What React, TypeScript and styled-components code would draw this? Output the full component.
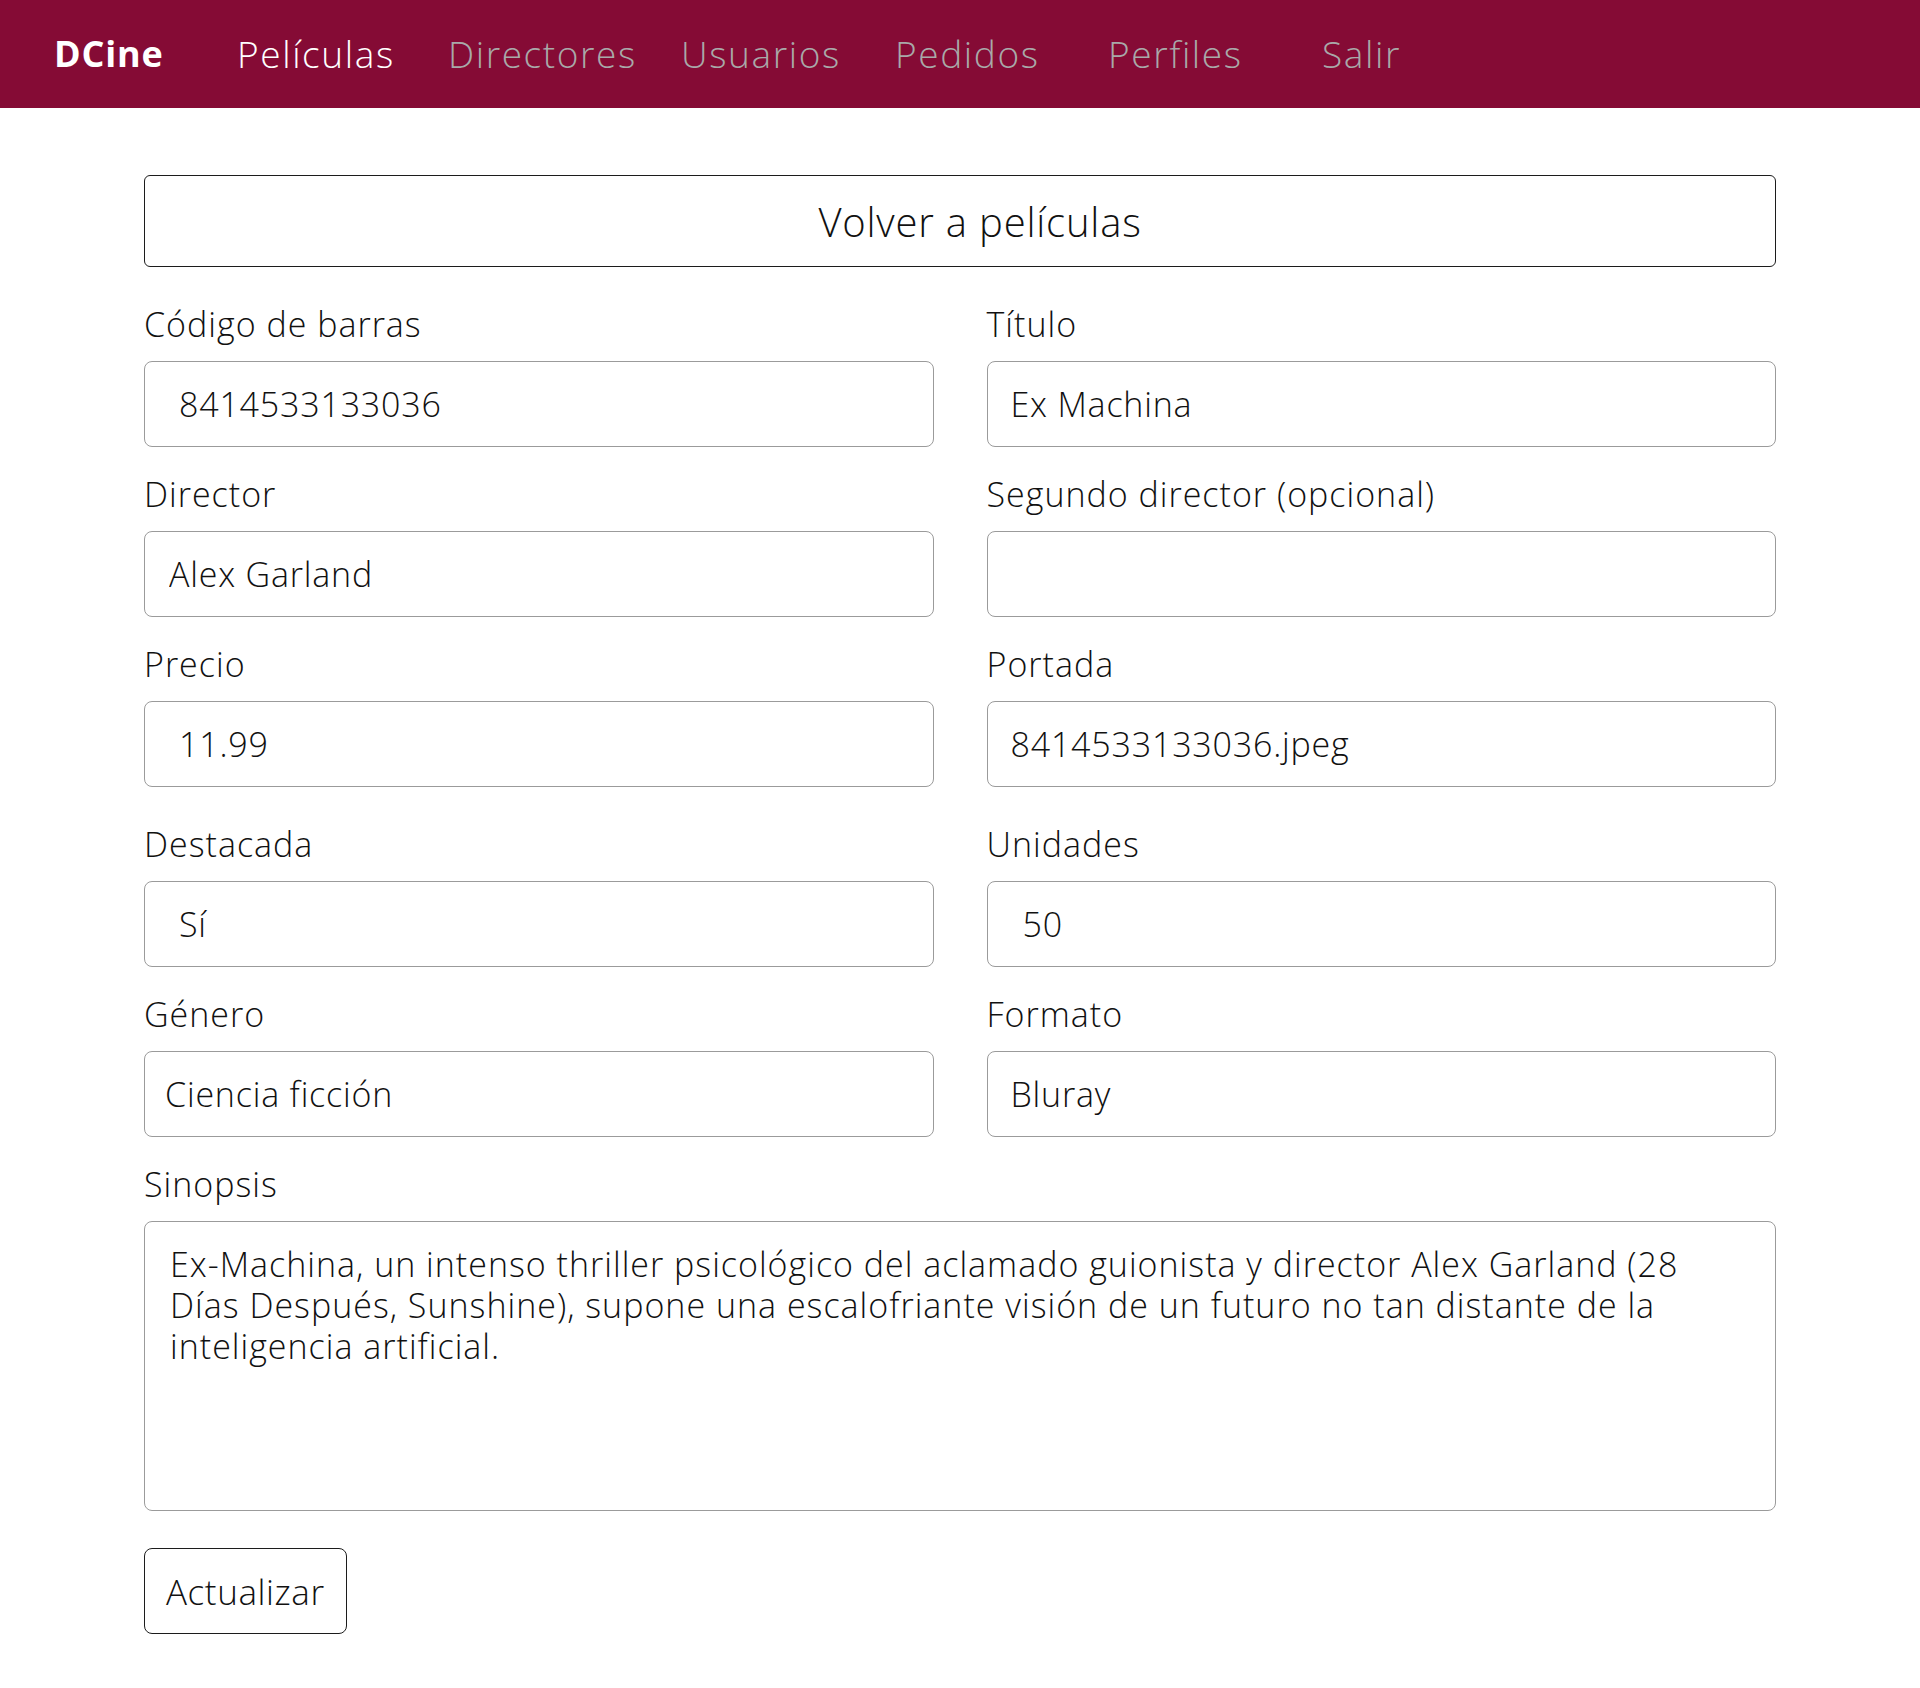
import React from "react";
import styled, { createGlobalStyle } from "styled-components";

const GlobalStyle = createGlobalStyle`
  * {
    box-sizing: border-box;
  }
  body {
    margin: 0;
    background: #fff;
    color: #111;
    font-family: "Open Sans", "Liberation Sans", sans-serif;
  }
`;

const links = [
  { label: "Películas", width: 211, active: true },
  { label: "Directores", width: 233 },
  { label: "Usuarios", width: 214 },
  { label: "Pedidos", width: 213 },
  { label: "Perfiles", width: 214 },
  { label: "Salir" },
];

const fields = [
  { label: "Código de barras", value: "8414533133036", pad: 34 },
  { label: "Título", value: "Ex Machina", pad: 23 },
  { label: "Director", value: "Alex Garland", pad: 24 },
  { label: "Segundo director (opcional)", value: "", pad: 23 },
  { label: "Precio", value: "11.99", pad: 34 },
  { label: "Portada", value: "8414533133036.jpeg", pad: 23 },
  { label: "Destacada", value: "Sí", pad: 34, spaced: true },
  { label: "Unidades", value: "50", pad: 35, spaced: true },
  { label: "Género", value: "Ciencia ficción", pad: 20 },
  { label: "Formato", value: "Bluray", pad: 23 },
];

const sinopsis =
  "Ex-Machina, un intenso thriller psicológico del aclamado guionista y director Alex Garland (28 Días Después, Sunshine), supone una escalofriante visión de un futuro no tan distante de la inteligencia artificial.";

const App: React.FC = () => {
  return (
    <>
      <GlobalStyle />
      <Navbar>
        <Brand href="#">DCine</Brand>
        {links.map((l) => (
          <NavLink key={l.label} href="#" $active={l.active} $w={l.width}>
            {l.label}
          </NavLink>
        ))}
      </Navbar>

      <Container>
        <BackButton type="button">Volver a películas</BackButton>

        <FormGrid>
          {fields.map((f) => (
            <Field key={f.label} $spaced={f.spaced}>
              <Label>{f.label}</Label>
              <Input value={f.value} readOnly $pad={f.pad} />
            </Field>
          ))}
          <Field $wide>
            <Label>Sinopsis</Label>
            <TextArea value={sinopsis} readOnly />
          </Field>
        </FormGrid>

        <SubmitButton type="button">Actualizar</SubmitButton>
      </Container>
    </>
  );
};

const Navbar = styled.nav`
  display: flex;
  align-items: center;
  height: 108px;
  padding: 0 0 2px 54px;
  background: #850b35;
`;

const Brand = styled.a`
  width: 183px;
  font-size: 36px;
  font-weight: 700;
  color: #fff;
  text-decoration: none;
  letter-spacing: 0.8px;
`;

const NavLink = styled.a<{ $active?: boolean; $w?: number }>`
  width: ${(p) => (p.$w ? `${p.$w}px` : "auto")};
  font-size: 37px;
  font-weight: 300;
  letter-spacing: 1.6px;
  color: ${(p) => (p.$active ? "#fff" : "#a9a9a9")};
  text-decoration: none;
`;

const Container = styled.main`
  width: 85%;
  margin: 0 auto;
  padding: 67px 0 40px;
`;

const BackButton = styled.button`
  display: block;
  width: 100%;
  height: 92px;
  margin-bottom: 37px;
  padding: 0 0 0 40px;
  background: #fff;
  border: 1px solid #1c1c1c;
  border-radius: 6px;
  font-family: inherit;
  font-size: 40px;
  font-weight: 300;
  letter-spacing: 0.8px;
  color: #111;
`;

const FormGrid = styled.div`
  display: grid;
  grid-template-columns: 1fr 1fr;
  column-gap: 53px;
  row-gap: 27px;
`;

const Field = styled.div<{ $spaced?: boolean; $wide?: boolean }>`
  display: flex;
  flex-direction: column;
  margin-top: ${(p) => (p.$spaced ? "10px" : "0")};
  grid-column: ${(p) => (p.$wide ? "1 / -1" : "auto")};
`;

const Label = styled.label`
  margin-bottom: 17px;
  font-size: 34px;
  font-weight: 300;
  line-height: 40px;
  letter-spacing: 1px;
  color: #111;
`;

const Input = styled.input<{ $pad: number }>`
  width: 100%;
  height: 86px;
  padding: 0 ${(p) => p.$pad}px;
  border: 1px solid #9b9b9b;
  border-radius: 8px;
  background: #fff;
  font-family: inherit;
  font-size: 34px;
  font-weight: 300;
  letter-spacing: 0.8px;
  color: #111;
  outline: none;
`;

const TextArea = styled.textarea`
  width: 100%;
  height: 290px;
  padding: 22px 25px;
  border: 1px solid #9b9b9b;
  border-radius: 8px;
  background: #fff;
  font-family: inherit;
  font-size: 34px;
  font-weight: 300;
  line-height: 41px;
  letter-spacing: 1px;
  color: #111;
  resize: none;
  outline: none;
`;

const SubmitButton = styled.button`
  margin-top: 37px;
  height: 86px;
  padding: 0 21px;
  background: #fff;
  border: 1px solid #1c1c1c;
  border-radius: 8px;
  font-family: inherit;
  font-size: 35px;
  font-weight: 300;
  letter-spacing: 0.6px;
  color: #111;
`;

export default App;
